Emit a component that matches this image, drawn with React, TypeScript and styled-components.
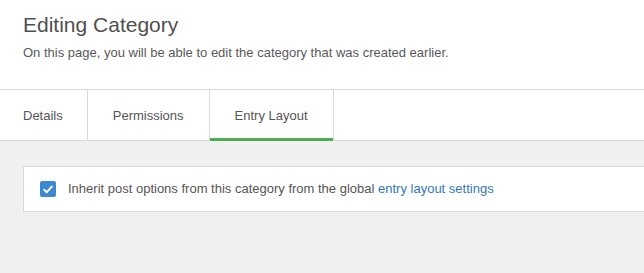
import React from "react";
import styled, { createGlobalStyle } from "styled-components";

const GlobalStyle = createGlobalStyle`
  html, body {
    margin: 0;
    padding: 0;
    background: #f0f0f0;
    font-family: "Liberation Sans", Arial, Helvetica, sans-serif;
    -webkit-font-smoothing: antialiased;
  }
  #root { min-height: 100vh; }
`;

const Page = styled.div`
  display: flex;
  flex-direction: column;
  min-height: 100vh;
  overflow: hidden;
`;

const Header = styled.header`
  background: #fff;
  padding: 13px 23px 27px;
  border-bottom: 1px solid #d9d9d9;
`;

const Title = styled.h1`
  margin: 0;
  font-size: 21px;
  line-height: 24px;
  font-weight: 400;
  color: #505050;
`;

const Subtitle = styled.p`
  margin: 7px 0 0;
  font-size: 13px;
  line-height: 18px;
  color: #5a5a5a;
`;

const TabBar = styled.nav`
  display: flex;
  background: #fff;
  border-bottom: 1px solid #d9d9d9;
  height: 50px;
`;

const Tab = styled.div<{ $active?: boolean; $first?: boolean }>`
  display: flex;
  align-items: center;
  padding: ${(p) => (p.$first ? "0 24px 0 23px" : "0 25px")};
  border-right: 1px solid #d9d9d9;
  font-size: 13px;
  color: #555;
  margin-bottom: -1px;
  box-shadow: ${(p) => (p.$active ? "inset 0 -3px 0 #4cae50" : "none")};
  cursor: pointer;
`;

const Content = styled.main`
  flex: 1;
  background: #f0f0f0;
  padding: 25px 0 0 23px;
`;

const Card = styled.div`
  display: flex;
  align-items: center;
  gap: 12px;
  background: #fff;
  border: 1px solid #d9d9d9;
  border-right: none;
  margin-right: -20px;
  padding: 14px 16px;
`;

const CheckBox = styled.span`
  width: 16px;
  height: 16px;
  border-radius: 2px;
  background: #3d88d2;
  display: flex;
  align-items: center;
  justify-content: center;
  flex-shrink: 0;
`;

const Label = styled.span`
  font-size: 13px;
  line-height: 16px;
  color: #555;
`;

const Link = styled.a`
  color: #3478b8;
  text-decoration: none;
`;

export default function App() {
  return (
    <>
      <GlobalStyle />
      <Page>
        <Header>
          <Title>Editing Category</Title>
          <Subtitle>
            On this page, you will be able to edit the category that was created earlier.
          </Subtitle>
        </Header>
        <TabBar>
          <Tab $first>Details</Tab>
          <Tab>Permissions</Tab>
          <Tab $active>Entry Layout</Tab>
        </TabBar>
        <Content>
          <Card>
            <CheckBox>
              <svg width="10" height="9" viewBox="0 0 10 9">
                <path
                  d="M1.2 4.8 L3.8 7.2 L8.8 1.6"
                  fill="none"
                  stroke="#fff"
                  strokeWidth="2"
                  strokeLinecap="round"
                  strokeLinejoin="round"
                />
              </svg>
            </CheckBox>
            <Label>
              Inherit post options from this category from the global{" "}
              <Link href="#">entry layout settings</Link>
            </Label>
          </Card>
        </Content>
      </Page>
    </>
  );
}
